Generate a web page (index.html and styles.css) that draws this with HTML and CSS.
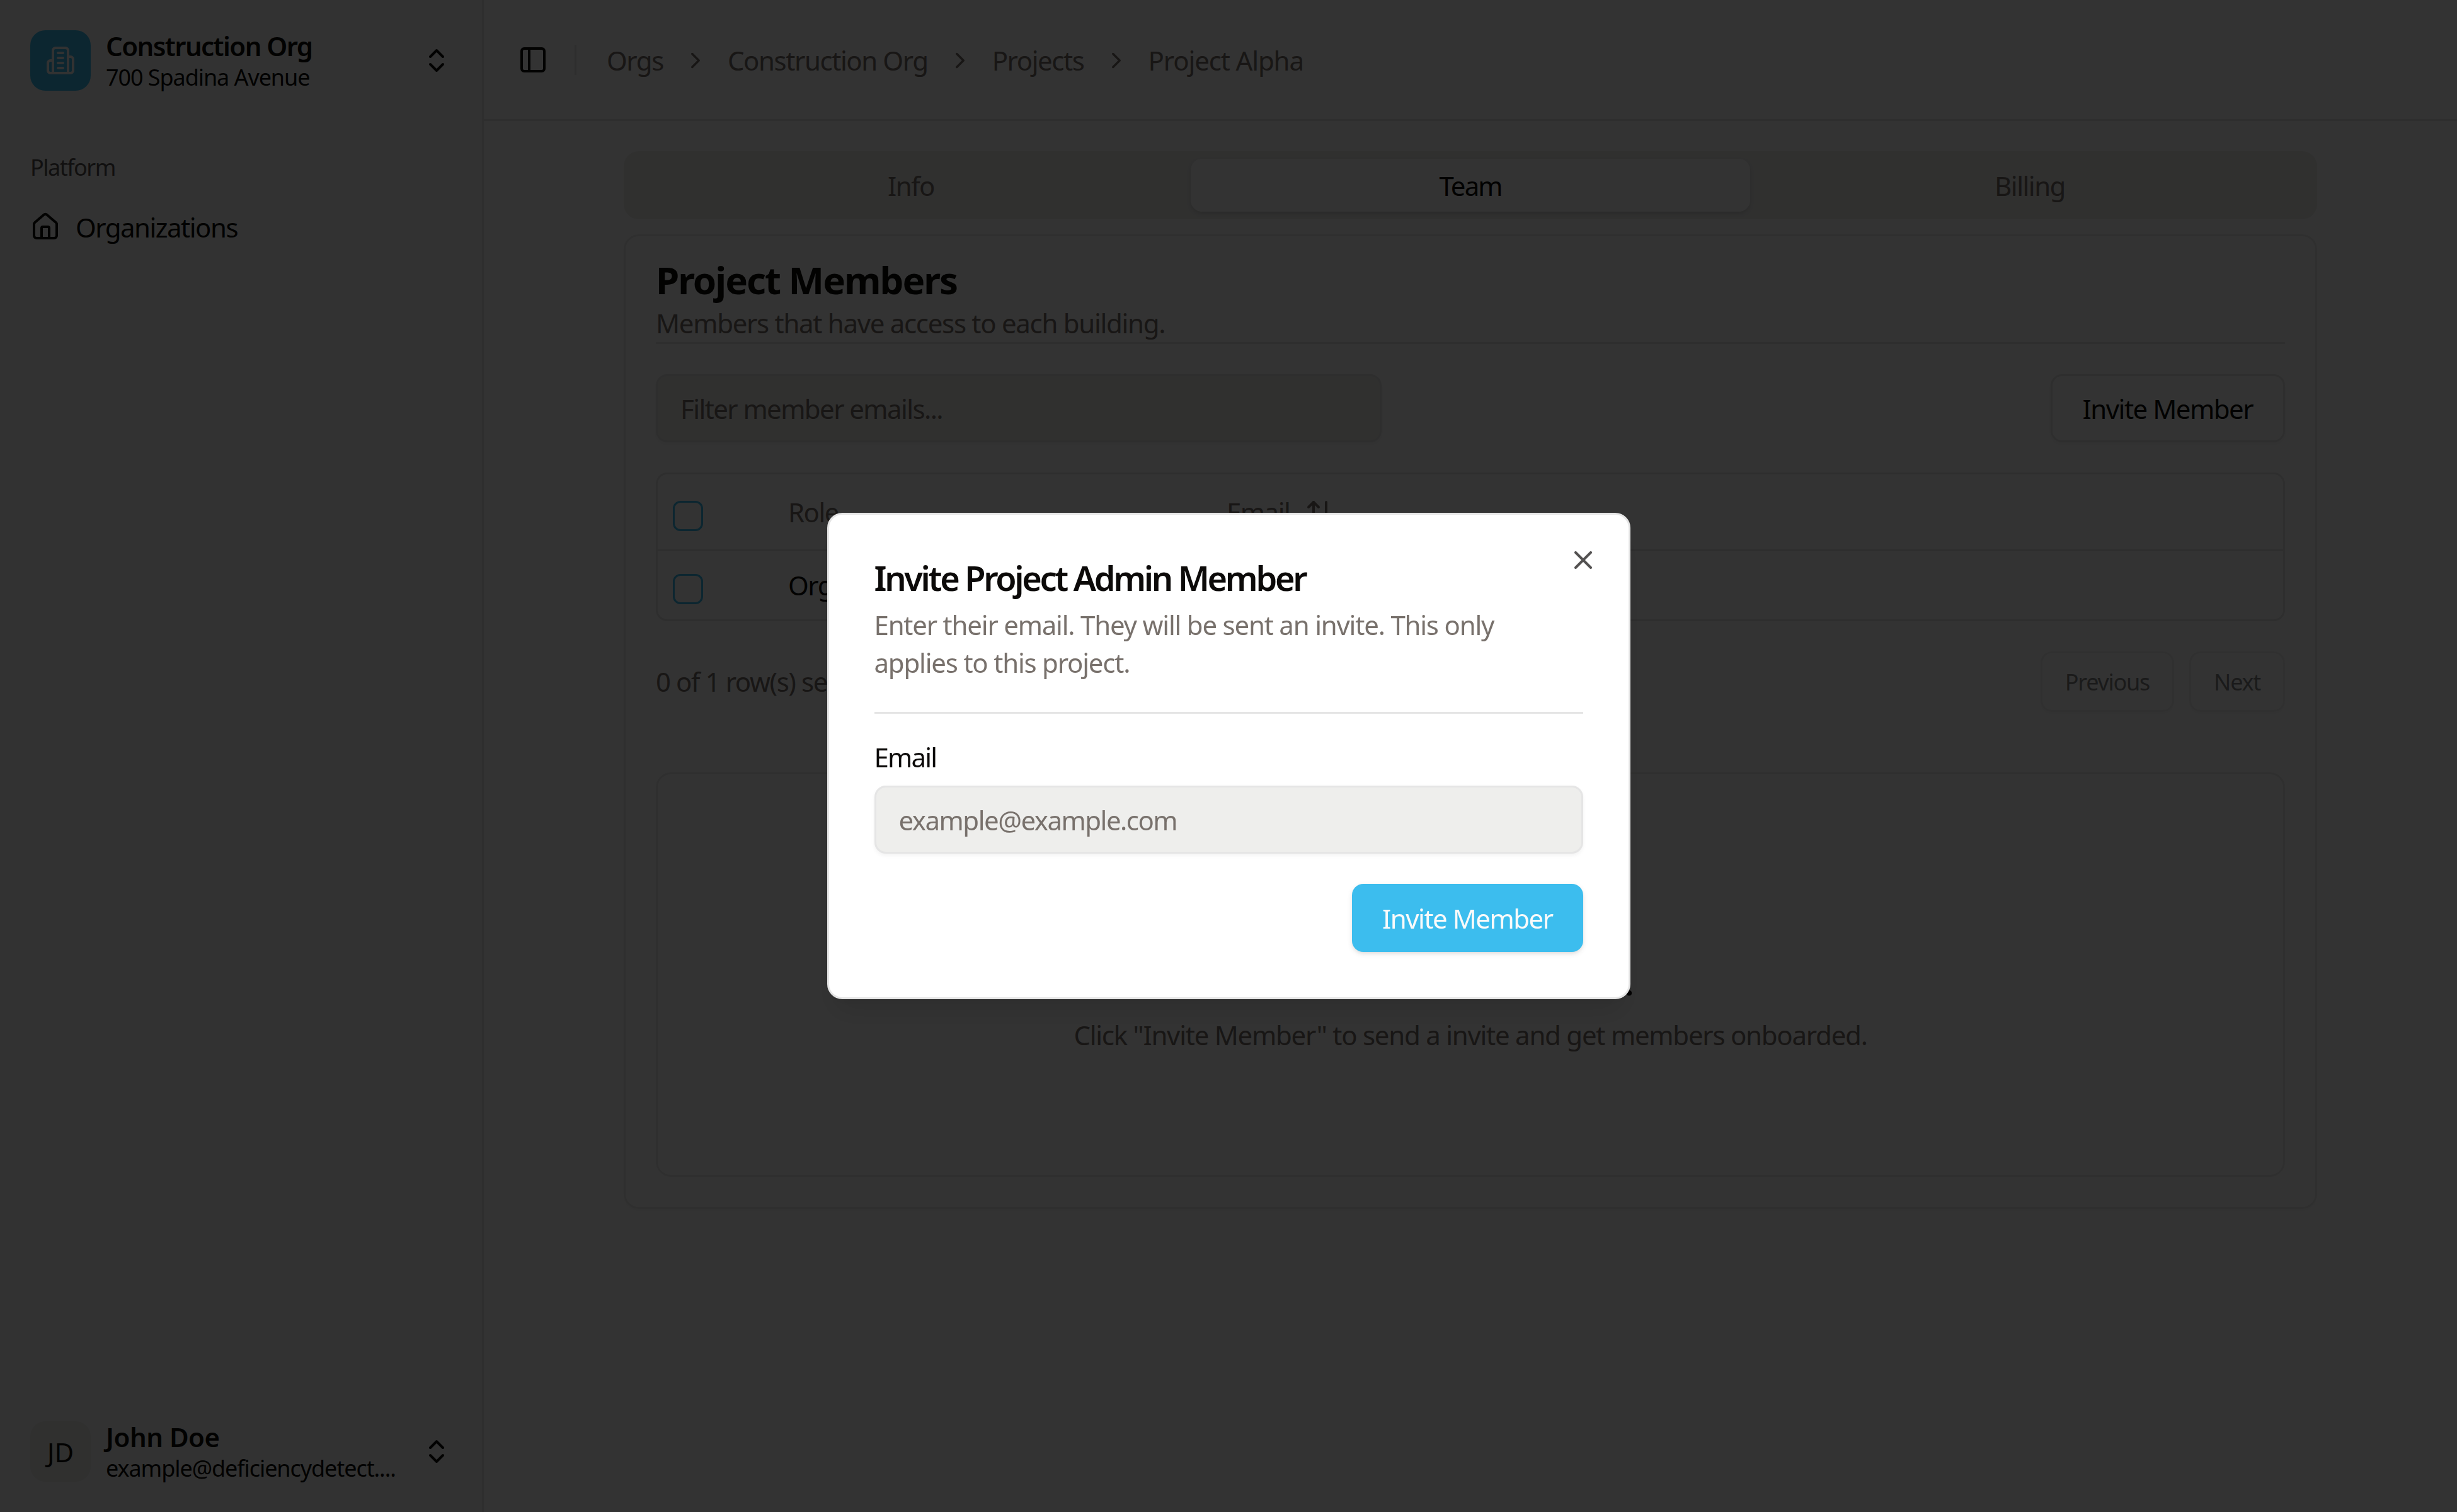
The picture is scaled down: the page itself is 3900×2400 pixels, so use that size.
FILE: index.html
```html
<!DOCTYPE html>
<html lang="en">
<head>
    <meta charset="UTF-8">
    <meta name="viewport" content="width=device-width, initial-scale=1.0">
    <title>Project Alpha - Team</title>
    <link rel="stylesheet" href="styles.css">
</head>
<body>
    <div class="app">
        <aside class="sidebar">
            <div class="sidebar-item">
                <div class="org-logo">
                    <svg class="icon" viewBox="0 0 24 24"><path d="M6 22V4a2 2 0 0 1 2-2h8a2 2 0 0 1 2 2v18Z"/><path d="M6 12H4a2 2 0 0 0-2 2v6a2 2 0 0 0 2 2h2"/><path d="M18 9h2a2 2 0 0 1 2 2v9a2 2 0 0 1-2 2h-2"/><path d="M10 6h4"/><path d="M10 10h4"/><path d="M10 14h4"/><path d="M10 18h4"/></svg>
                </div>
                <div class="item-text">
                    <span class="item-title">Construction Org</span>
                    <span class="item-sub">700 Spadina Avenue</span>
                </div>
                <svg class="icon" viewBox="0 0 24 24"><path d="m7 15 5 5 5-5"/><path d="m7 9 5-5 5 5"/></svg>
            </div>

            <nav class="sidebar-nav">
                <div class="nav-label">Platform</div>
                <a class="nav-link" href="#">
                    <svg class="icon" viewBox="0 0 24 24"><path d="M15 21v-8a1 1 0 0 0-1-1h-4a1 1 0 0 0-1 1v8"/><path d="M3 10a2 2 0 0 1 .709-1.528l7-5.999a2 2 0 0 1 2.582 0l7 5.999A2 2 0 0 1 21 10v9a2 2 0 0 1-2 2H5a2 2 0 0 1-2-2z"/></svg>
                    <span>Organizations</span>
                </a>
            </nav>

            <div class="sidebar-item">
                <div class="avatar">JD</div>
                <div class="item-text">
                    <span class="item-title user-name">John Doe</span>
                    <span class="item-sub">example@deficiencydetect....</span>
                </div>
                <svg class="icon" viewBox="0 0 24 24"><path d="m7 15 5 5 5-5"/><path d="m7 9 5-5 5 5"/></svg>
            </div>
        </aside>

        <main class="main">
            <header class="header">
                <button class="sidebar-toggle">
                    <svg class="icon" viewBox="0 0 24 24"><rect width="18" height="18" x="3" y="3" rx="2"/><path d="M9 3v18"/></svg>
                </button>
                <div class="header-separator"></div>
                <nav class="breadcrumb">
                    <a href="#">Orgs</a>
                    <svg class="icon chevron" viewBox="0 0 24 24"><path d="m9 18 6-6-6-6"/></svg>
                    <a href="#">Construction Org</a>
                    <svg class="icon chevron" viewBox="0 0 24 24"><path d="m9 18 6-6-6-6"/></svg>
                    <a href="#">Projects</a>
                    <svg class="icon chevron" viewBox="0 0 24 24"><path d="m9 18 6-6-6-6"/></svg>
                    <a class="current" href="#">Project Alpha</a>
                </nav>
            </header>

            <div class="content">
                <div class="tabs">
                    <button class="tab">Info</button>
                    <button class="tab active">Team</button>
                    <button class="tab">Billing</button>
                </div>

                <section class="card">
                    <div class="card-header">
                        <h2>Project Members</h2>
                        <p>Members that have access to each building.</p>
                    </div>

                    <div class="toolbar">
                        <div class="input filter">Filter member emails...</div>
                        <button class="btn btn-outline">Invite Member</button>
                    </div>

                    <div class="table">
                        <div class="row row-head">
                            <div><div class="checkbox"></div></div>
                            <div>Role</div>
                            <div class="sort">Email <svg class="icon" viewBox="0 0 24 24"><path d="m21 16-4 4-4-4"/><path d="M17 20V4"/><path d="m3 8 4-4 4 4"/><path d="M7 4v16"/></svg></div>
                        </div>
                        <div class="row">
                            <div><div class="checkbox"></div></div>
                            <div>Org</div>
                        </div>
                    </div>

                    <div class="pagination">
                        <span class="row-count">0 of 1 row(s) selected.</span>
                        <button class="btn btn-outline btn-sm" disabled>Previous</button>
                        <button class="btn btn-outline btn-sm" disabled>Next</button>
                    </div>

                    <div class="empty-state">
                        <h3>No members invited.</h3>
                        <p>Click "Invite Member" to send a invite and get members onboarded.</p>
                    </div>
                </section>
            </div>
        </main>
    </div>

    <div class="overlay">
        <div class="dialog">
            <button class="dialog-close">
                <svg class="icon" viewBox="0 0 24 24"><path d="M18 6 6 18"/><path d="m6 6 12 12"/></svg>
            </button>
            <h2>Invite Project Admin Member</h2>
            <p class="dialog-text">Enter their email. They will be sent an invite. This only applies to this project.</p>
            <div class="dialog-divider"></div>
            <label>Email</label>
            <div class="input">example@example.com</div>
            <div class="dialog-footer">
                <button class="btn btn-primary">Invite Member</button>
            </div>
        </div>
    </div>
</body>
</html>
```
FILE: styles.css
```css
:root {
    --background: #fff;
    --foreground: #0c0a09;
    --muted: #eeeeec;
    --muted-foreground: #78716c;
    --border: #e5e5e5;
    --border-light: #ececeb;
    --primary: #3cbdee;
    --line: 0.0625rem;
}

html {
    font-size: 48px;
}

* {
    box-sizing: border-box;
}

body {
    margin: 0;
    font-family: 'Noto Sans', 'Segoe UI', sans-serif;
    font-size: 0.875rem;
    line-height: 1.25rem;
    letter-spacing: -0.036em;
    color: var(--foreground);
    background-color: var(--background);
    overflow: hidden;
}

h2, h3, p {
    margin: 0;
}

a {
    color: inherit;
    text-decoration: none;
}

button {
    font: inherit;
    letter-spacing: inherit;
    color: inherit;
    background: none;
    border: none;
    padding: 0;
}

.icon {
    width: 1rem;
    height: 1rem;
    flex-shrink: 0;
    fill: none;
    stroke: currentColor;
    stroke-width: 2;
    stroke-linecap: round;
    stroke-linejoin: round;
}

.app {
    display: flex;
    height: 100vh;
}

/* Sidebar */
.sidebar {
    width: 16rem;
    flex-shrink: 0;
    display: flex;
    flex-direction: column;
    padding: 0.5rem;
    background-color: #fafafa;
    border-right: var(--line) solid var(--border);
}

.sidebar-item {
    display: flex;
    align-items: center;
    gap: 0.5rem;
    height: 3rem;
    padding: 0.5rem;
}

.org-logo,
.avatar {
    width: 2rem;
    height: 2rem;
    flex-shrink: 0;
    display: flex;
    align-items: center;
    justify-content: center;
    border-radius: 0.5rem;
}

.org-logo {
    background-color: var(--primary);
    color: #fafafa;
}

.avatar {
    padding-top: 2px;
    letter-spacing: 0;
    background-color: var(--muted);
}

.item-text {
    flex: 1;
    display: grid;
    min-width: 0;
    padding-top: 2px;
    white-space: nowrap;
}

.item-title {
    font-weight: 600;
    line-height: 1.25;
    letter-spacing: -0.038em;
}

.user-name {
    letter-spacing: -0.012em;
}

.item-sub {
    font-size: 0.75rem;
    line-height: 1rem;
    letter-spacing: -0.03em;
}

.sidebar-nav {
    flex: 1;
    padding-top: 1rem;
}

.nav-label {
    display: flex;
    align-items: center;
    height: 2rem;
    padding: 3px 0.5rem 0;
    font-size: 0.75rem;
    color: #545352;
}

.nav-link {
    display: flex;
    align-items: center;
    gap: 0.5rem;
    height: 2rem;
    padding: 0 0.5rem;
}

.nav-link span {
    padding-top: 2px;
}

/* Main */
.main {
    flex: 1;
}

.header {
    display: flex;
    align-items: center;
    gap: 0.5rem;
    height: 4rem;
    padding-left: 0.75rem;
    border-bottom: var(--line) solid var(--border);
}

.sidebar-toggle {
    width: 1.75rem;
    height: 1.75rem;
    display: flex;
    align-items: center;
    justify-content: center;
}

.header-separator {
    width: var(--line);
    height: 1rem;
    margin-right: 0.5rem;
    background-color: var(--border);
}

.breadcrumb {
    display: flex;
    align-items: center;
    gap: 0.625rem;
    padding-top: 2px;
    letter-spacing: -0.034em;
    color: var(--muted-foreground);
}

.breadcrumb .current {
    letter-spacing: -0.027em;
}

.chevron {
    width: 0.875rem;
    height: 0.875rem;
}

.content {
    width: 56rem;
    margin: 0 auto;
    padding-top: 1rem;
}

.tabs {
    display: grid;
    grid-template-columns: repeat(3, 1fr);
    height: 2.25rem;
    padding: 0.25rem;
    border-radius: 0.5rem;
    background-color: var(--muted);
    color: var(--muted-foreground);
}

.tab {
    padding-top: 2px;
    border-radius: 0.375rem;
}

.tab.active {
    background-color: var(--background);
    color: var(--foreground);
    letter-spacing: -0.046em;
    box-shadow: 0 3px 9px rgba(0, 0, 0, 0.1), 0 3px 6px -3px rgba(0, 0, 0, 0.1);
}

.card {
    margin-top: 0.5rem;
    padding: 1rem;
    border: var(--line) solid var(--border-light);
    border-radius: 0.5rem;
    box-shadow: 0 3px 6px rgba(0, 0, 0, 0.03);
}

.card-header {
    border-bottom: var(--line) solid var(--border);
}

.card-header h2 {
    font-size: 1.25rem;
    line-height: 0.875rem;
    font-weight: 700;
    letter-spacing: -0.0335em;
}

.card-header p {
    margin-top: 0.375rem;
    letter-spacing: -0.031em;
    color: var(--muted-foreground);
}

.toolbar {
    display: flex;
    justify-content: space-between;
    margin: 1rem 0;
}

.input {
    display: flex;
    align-items: center;
    height: 2.25rem;
    padding: 2px 0.75rem 0;
    border: var(--line) solid var(--border);
    border-radius: 0.375rem;
    background-color: var(--muted);
    color: var(--muted-foreground);
    box-shadow: 0 3px 6px rgba(0, 0, 0, 0.05);
}

.filter {
    width: 24rem;
    letter-spacing: -0.038em;
}

.btn {
    height: 2.25rem;
    padding: 2px 1rem 0;
    border-radius: 0.375rem;
}

.btn-outline {
    border: var(--line) solid var(--border);
    box-shadow: 0 3px 6px rgba(0, 0, 0, 0.05);
}

.btn-sm {
    height: 2rem;
    padding: 2px 0.75rem 0;
    font-size: 0.75rem;
    line-height: 1rem;
    letter-spacing: -0.035em;
}

.btn:disabled {
    opacity: 0.5;
}

.btn-primary {
    background-color: var(--primary);
    color: #fafafa;
    box-shadow: 0 3px 9px rgba(0, 0, 0, 0.1), 0 3px 6px -3px rgba(0, 0, 0, 0.1);
}

.table {
    border: var(--line) solid var(--border);
    border-radius: 0.375rem;
}

.row {
    display: grid;
    grid-template-columns: 207px 14.5rem 1fr;
    align-items: center;
    height: 2.25rem;
}

.row-head {
    height: 122px;
    border-bottom: var(--line) solid var(--border);
    color: var(--muted-foreground);
}

.checkbox {
    width: 1rem;
    height: 1rem;
    margin: 0.25rem 0 0 0.5rem;
    border: var(--line) solid var(--primary);
    border-radius: 0.25rem;
}

.sort {
    display: flex;
    align-items: center;
    gap: 0.5rem;
}

.pagination {
    display: flex;
    align-items: center;
    gap: 0.5rem;
    padding: 1rem 0;
}

.row-count {
    flex: 1;
    letter-spacing: -0.034em;
    color: var(--muted-foreground);
}

.empty-state {
    height: 642px;
    margin-top: 1rem;
    padding-top: 6rem;
    border: var(--line) solid var(--border-light);
    border-radius: 0.5rem;
    text-align: center;
}

.empty-state h3 {
    font-size: 1.125rem;
    line-height: 1.75rem;
    font-weight: 600;
    letter-spacing: -0.036em;
}

.empty-state p {
    margin-top: 0.25rem;
    letter-spacing: -0.03em;
    color: var(--muted-foreground);
}

/* Dialog */
.overlay {
    position: fixed;
    inset: 0;
    display: flex;
    align-items: center;
    justify-content: center;
    background-color: rgba(0, 0, 0, 0.8);
}

.dialog {
    position: relative;
    width: 1275px;
    height: 772px;
    padding: 1.5rem;
    border: var(--line) solid var(--border);
    border-radius: 0.5rem;
    background-color: var(--background);
    box-shadow: 0 30px 45px -9px rgba(0, 0, 0, 0.1), 0 12px 18px -12px rgba(0, 0, 0, 0.1);
}

.dialog-close {
    position: absolute;
    top: 1rem;
    right: 1rem;
    height: 1rem;
    line-height: 0;
    opacity: 0.7;
}

.dialog h2 {
    padding-top: 1px;
    font-size: 1.125rem;
    line-height: 1.125rem;
    font-weight: 600;
    letter-spacing: -0.061em;
}

.dialog-text {
    margin-top: 0.375rem;
    letter-spacing: -0.029em;
    color: var(--muted-foreground);
}

.dialog-divider {
    height: var(--line);
    margin: 1rem 0;
    background-color: var(--border);
}

.dialog label {
    display: block;
    line-height: 0.875rem;
    letter-spacing: -0.044em;
    margin-bottom: 0.5rem;
}

.dialog-footer {
    display: flex;
    justify-content: flex-end;
    margin-top: 1rem;
}
```
